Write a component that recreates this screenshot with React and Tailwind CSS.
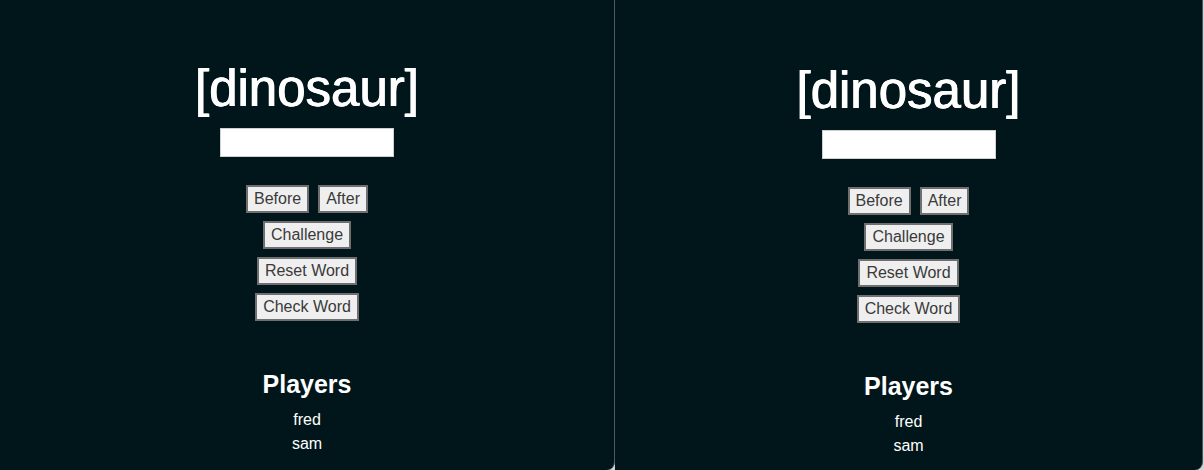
import React from "react";

function Panel({ offset, className }) {
  const btn =
    "h-[28px] px-[6px] border-2 border-[#6f6f6f] bg-[#efefef] text-[16px] leading-[20px] text-[#3a3a3a]";
  return (
    <div
      className={
        "h-full flex flex-col items-center bg-[#01161a] border-r border-[#4c5b5f] rounded-br-[8px] " +
        className
      }
    >
      <div className={offset ? "h-[66px] shrink-0" : "h-[64px] shrink-0"} />
      <h1 className="text-[51px] leading-[50px] text-white [text-shadow:0.5px_0_0_#fff,-0.5px_0_0_#fff]">[dinosaur]</h1>
      <div className="mt-[14px] w-[174px] h-[29px] bg-white border border-[#d0d0d0]" />
      <div className="mt-[28px] flex flex-col items-center gap-[8px]">
        <div className="flex gap-[9px]">
          <button className={btn}>Before</button>
          <button className={btn}>After</button>
        </div>
        <button className={btn}>Challenge</button>
        <button className={btn}>Reset Word</button>
        <button className={btn}>Check Word</button>
      </div>
      <h2 className="mt-[51px] text-[25px] leading-[25px] font-bold text-white">Players</h2>
      <ul className="mt-[11px] flex flex-col items-center text-[16px] leading-[24px] text-white">
        <li>fred</li>
        <li>sam</li>
      </ul>
    </div>
  );
}

export default function App() {
  return (
    <div
      className="w-[1204px] h-[470px] flex bg-[#cfd3d4] overflow-hidden"
      style={{ fontFamily: '"Liberation Sans", Arial, sans-serif' }}
    >
      <Panel className="w-[615px]" />
      <Panel offset className="w-[588px]" />
    </div>
  );
}
